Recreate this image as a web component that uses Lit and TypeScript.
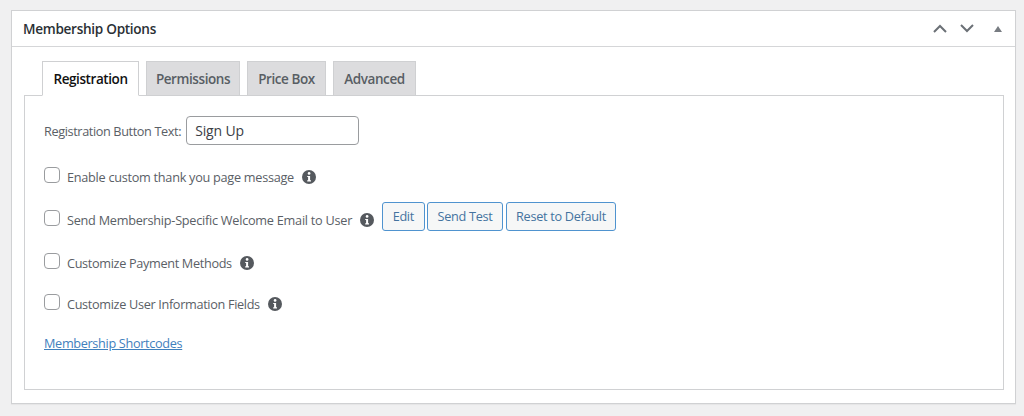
import { LitElement, html, css, svg } from "lit";
import { customElement } from "lit/decorators.js";

const info = svg`<svg class="info" viewBox="0 0 14 14" width="14" height="14"><circle cx="7" cy="7" r="7" fill="#55595e"/><circle cx="7.1" cy="3.4" r="1.35" fill="#fff"/><path d="M5.2 5.9h2.9v4.4h0.9v1.2H5.2v-1.2h0.9V7.1h-0.9z" fill="#fff"/></svg>`;

@customElement("app-root")
export class AppRoot extends LitElement {
  static styles = css`
    :host { display: block; width: 1024px; height: 416px; background: #f0f0f1; font-family: "Open Sans", "Noto Sans", sans-serif; font-size: 12.7px; color: #5a6066; overflow: hidden; }
    .page { padding: 10px 8px 0 11px; }
    .card { height: 394px; box-sizing: border-box; background: #fff; border: 1px solid #d0d1d3; box-shadow: 0 1px 1px rgba(0,0,0,.04); }
    .head { height: 36px; box-sizing: border-box; display: flex; align-items: center; border-bottom: 1px solid #d5d6d8; padding: 0 13px 0 11px; }
    .title { flex: 1; font-size: 13.6px; font-weight: 600; color: #2a3035; letter-spacing: -0.3px; }
    .ctl { display: flex; align-items: center; }
    .ctl svg { display: block; }
    .ctl .down { margin-left: 13px; }
    .ctl .tri { margin-left: 20px; }
    .body { padding: 14px 11px 0 12px; }
    .tabs { display: flex; gap: 7px; padding-left: 18px; position: relative; z-index: 1; margin-bottom: -1px; }
    .tab { height: 35px; box-sizing: border-box; display: flex; align-items: center; justify-content: center; border: 1px solid #cfd0d2; background: #dcdcde; font-size: 13.5px; font-weight: 600; color: #585e64; letter-spacing: -0.42px; }
    .tab.on { background: #fff; color: #111; border-bottom-color: #fff; }
    .panel { height: 295px; box-sizing: border-box; border: 1px solid #d0d1d3; padding: 20px 19px 0; }
    .row { display: flex; align-items: center; }
    .first { height: 29px; gap: 5px; letter-spacing: -0.38px; }
    input.text { width: 173px; height: 29px; box-sizing: border-box; border: 1px solid #9a9c9f; border-radius: 4px; padding: 0 8px; font: 14px "Open Sans", sans-serif; color: #3a4045; background: #fff; letter-spacing: -0.15px; margin: 0; }
    .check { height: 30px; }
    .r1 { margin-top: 17px; }
    .r2 { margin-top: 13px; }
    .r3 { margin-top: 13px; }
    .r4 { margin-top: 11px; }
    .box { width: 16px; height: 16px; box-sizing: border-box; border: 1px solid #9a9c9f; border-radius: 4px; background: #fff; margin-right: 7px; flex: none; position: relative; top: -2px; }
    .label { letter-spacing: -0.27px; }
    .label.wide { letter-spacing: -0.25px; }
    .label.tight { letter-spacing: -0.33px; }
    .info { margin-left: 8px; flex: none; }
    .btns { display: flex; gap: 2.5px; margin-left: 8px; position: relative; top: -4px; }
    .btn { height: 29px; box-sizing: border-box; border: 1px solid #4f93cf; border-radius: 3px; background: #f6f7f7; color: #44739f; font-size: 12.7px; letter-spacing: -0.29px; padding: 0 9.5px; display: flex; align-items: center; }
    .link { display: block; margin-top: 15px; color: #3f80bd; text-decoration: underline; letter-spacing: -0.33px; width: fit-content; }
  `;

  render() {
    const tabs: [string, number][] = [["Registration", 97], ["Permissions", 94], ["Price Box", 79], ["Advanced", 83]];
    return html`<div class="page"><div class="card">
      <div class="head">
        <div class="title">Membership Options</div>
        <div class="ctl">
          <svg width="14" height="9" viewBox="0 0 14 9"><path d="M1 8L7 2L13 8" fill="none" stroke="#6b7076" stroke-width="2"/></svg>
          <svg class="down" width="14" height="9" viewBox="0 0 14 9"><path d="M1 1L7 7L13 1" fill="none" stroke="#6b7076" stroke-width="2"/></svg>
          <svg class="tri" width="8" height="6" viewBox="0 0 8 6"><path d="M4 0L8 6H0z" fill="#787c82"/></svg>
        </div>
      </div>
      <div class="body">
        <div class="tabs">
          ${tabs.map(([t, w], i) => html`<div class="tab ${i === 0 ? "on" : ""}" style="width:${w}px">${t}</div>`)}
        </div>
        <div class="panel">
          <div class="row first"><span>Registration Button Text:</span><input class="text" value="Sign Up" /></div>
          <div class="row check r1"><span class="box"></span><span class="label">Enable custom thank you page message</span>${info}</div>
          <div class="row check r2"><span class="box"></span><span class="label wide">Send Membership-Specific Welcome Email to User</span>${info}
            <div class="btns"><span class="btn">Edit</span><span class="btn">Send Test</span><span class="btn">Reset to Default</span></div>
          </div>
          <div class="row check r3"><span class="box"></span><span class="label tight">Customize Payment Methods</span>${info}</div>
          <div class="row check r4"><span class="box"></span><span class="label tight">Customize User Information Fields</span>${info}</div>
          <a class="link">Membership Shortcodes</a>
        </div>
      </div>
    </div></div>`;
  }
}
